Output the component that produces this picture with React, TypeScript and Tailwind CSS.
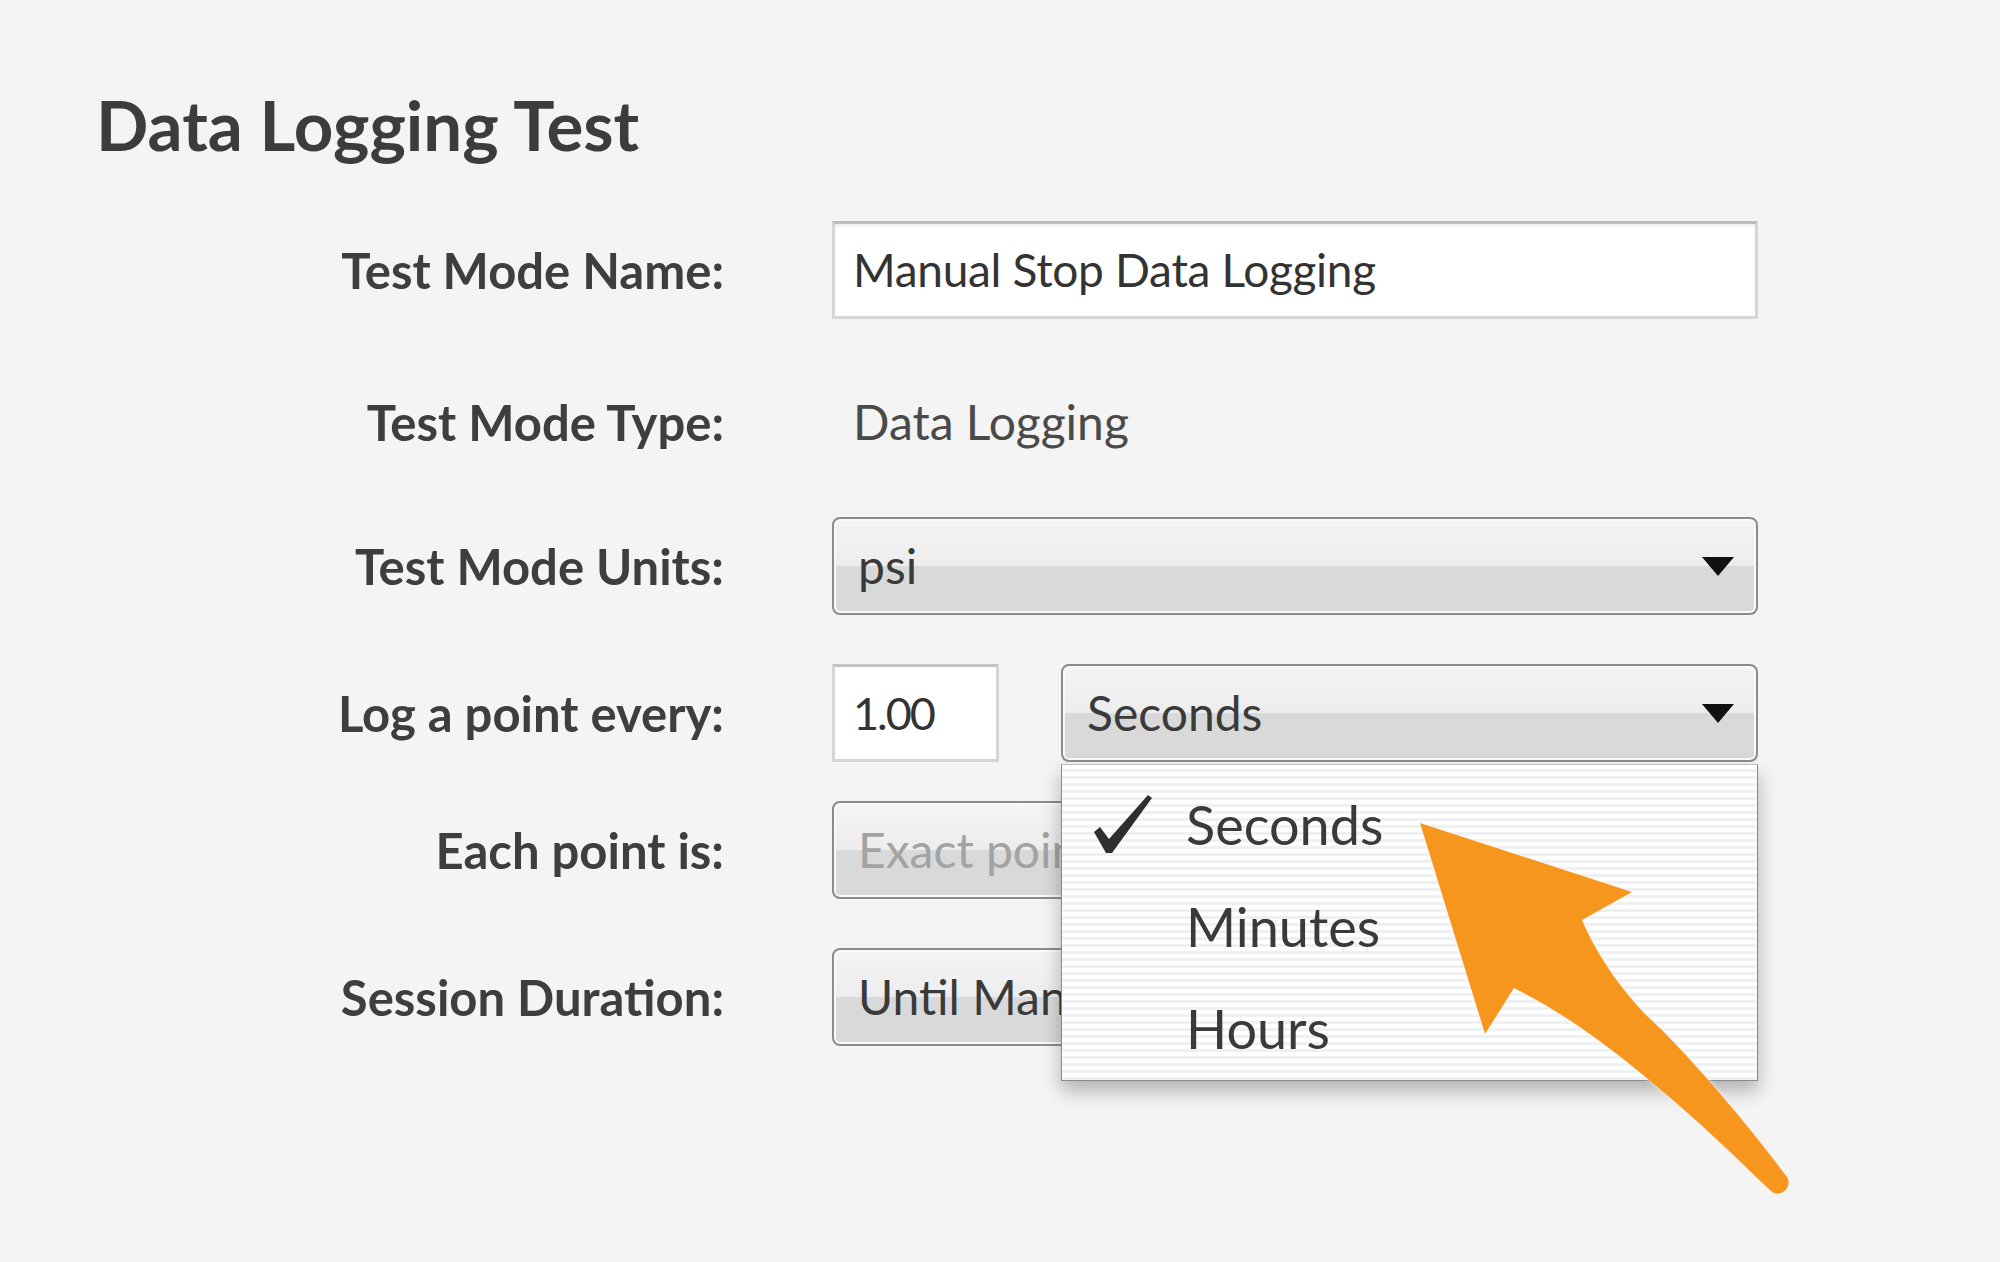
import React from 'react';

const selectBg =
    'bg-[linear-gradient(to_bottom,#f4f4f4_0%,#ededed_50%,#d9d9d9_50%,#d9d9d9_100%)]';

function Arrow({ className = '' }: { className?: string }) {
    return (
        <svg className={className} width="32" height="19" viewBox="0 0 32 19">
            <path d="M0 0 H32 L16 19 Z" fill="#111" />
        </svg>
    );
}

function Row({ label, top, children }: { label: string; top: string; children: React.ReactNode }) {
    return (
        <div className={`flex items-center h-[98px] ${top}`}>
            <div className="w-[724px] text-right text-[49px] leading-none font-bold text-[#3e3e3e]">{label}</div>
            <div className="ml-[108px] w-[926px] h-full flex items-center">{children}</div>
        </div>
    );
}

function Select({ value, muted, clip, className = '', children }: { value: string; muted?: boolean; clip?: boolean; className?: string; children?: React.ReactNode }) {
    return (
        <div
            className={`relative h-full flex items-center justify-between border-2 border-[#8c8c8c] rounded-[8px] shadow-[inset_0_0_0_2px_#fafafa] pl-[24px] pr-[22px] ${selectBg} ${className}`}
        >
            <span
                className={`text-[48px] leading-[1.2] whitespace-nowrap ${clip ? 'max-w-[203px] overflow-hidden' : ''} ${muted ? 'text-[#a3a3a3]' : 'text-[#3a3a3a]'}`}
            >
                {value}
            </span>
            <Arrow />
            {children}
        </div>
    );
}

function CheckMark() {
    return (
        <svg width="60" height="60" viewBox="0 0 60 60">
            <path d="M1 37 L7 32 L16 44 L55 0 L59 3 L19 58 L13 58 Z" fill="#2f2f2f" />
        </svg>
    );
}

export default function App() {
    return (
        <div
            className="relative w-[2000px] h-[1262px] overflow-hidden bg-[#f4f4f4] text-[#3a3a3a]"
            style={{ fontFamily: 'Lato, "Open Sans", sans-serif' }}
        >
            <h1 className="pl-[96px] pt-[90px] text-[69px] leading-none font-bold text-[#3c3c3c]">Data Logging Test</h1>

            <div className="flex flex-col">
                <Row label="Test Mode Name:" top="mt-[62px]">
                    <div className="w-full h-full flex items-center bg-white border-[3px] border-[#d6d6d6] border-t-[#bdbdbd] shadow-[inset_0_2px_3px_rgba(0,0,0,0.08)] pl-[18px]">
                        <span className="text-[46px] leading-none tracking-[-0.3px] text-[#333]">Manual Stop Data Logging</span>
                    </div>
                </Row>

                <Row label="Test Mode Type:" top="mt-[54px]">
                    <span className="pl-[21px] text-[48px] leading-none text-[#4a4a4a]">Data Logging</span>
                </Row>

                <Row label="Test Mode Units:" top="mt-[46px]">
                    <Select value="psi" className="w-full" />
                </Row>

                <Row label="Log a point every:" top="mt-[49px]">
                    <div className="w-[167px] h-full flex items-center bg-white border-[3px] border-[#d6d6d6] border-t-[#c4c4c4] pl-[18px]">
                        <span className="text-[45px] leading-none tracking-[-2px] text-[#333]">1.00</span>
                    </div>
                    <Select value="Seconds" className="ml-[62px] flex-1 z-20">
                        <div className="absolute left-[-2px] right-[-2px] top-[calc(100%+4px)] h-[317px] border border-[#8a8a8a] border-t-[#bdbdbd] shadow-[0_10px_18px_rgba(0,0,0,0.28)] bg-[repeating-linear-gradient(to_bottom,#ffffff_0px,#ffffff_4px,#edf1f3_4px,#edf1f3_7px)] flex flex-col pt-[9px]">
                            {['Seconds', 'Minutes', 'Hours'].map((item, i) => (
                                <div key={item} className="flex items-center h-[102px]">
                                    <div className="w-[124px] pl-[31px] flex items-center">{i === 0 && <CheckMark />}</div>
                                    <span className="text-[54px] leading-none text-[#3a3a3a]">{item}</span>
                                </div>
                            ))}
                        </div>
                    </Select>
                </Row>

                <Row label="Each point is:" top="mt-[39px]">
                    <Select value="Exact point" muted clip className="w-full" />
                </Row>

                <Row label="Session Duration:" top="mt-[49px]">
                    <Select value="Until Manual Stop" clip className="w-full" />
                </Row>
            </div>

            <svg className="absolute inset-0 pointer-events-none z-30" width="2000" height="1262" viewBox="0 0 2000 1262">
                <defs>
                    <filter id="glow" x="-10%" y="-10%" width="120%" height="120%">
                        <feDropShadow dx="0" dy="0" stdDeviation="2" floodColor="#fff3da" floodOpacity="0.9" />
                    </filter>
                </defs>
                <path
                    filter="url(#glow)"
                    fill="#f7961f"
                    d="M1420 823 L1632 892 L1582 920 C1598 958 1628 1000 1662 1030 C1707 1076 1752 1130 1787 1177 C1793 1187 1781 1198 1772 1192 C1738 1160 1698 1120 1656 1086 C1614 1050 1566 1014 1514 988 L1485 1034 Z"
                />
            </svg>
        </div>
    );
}
